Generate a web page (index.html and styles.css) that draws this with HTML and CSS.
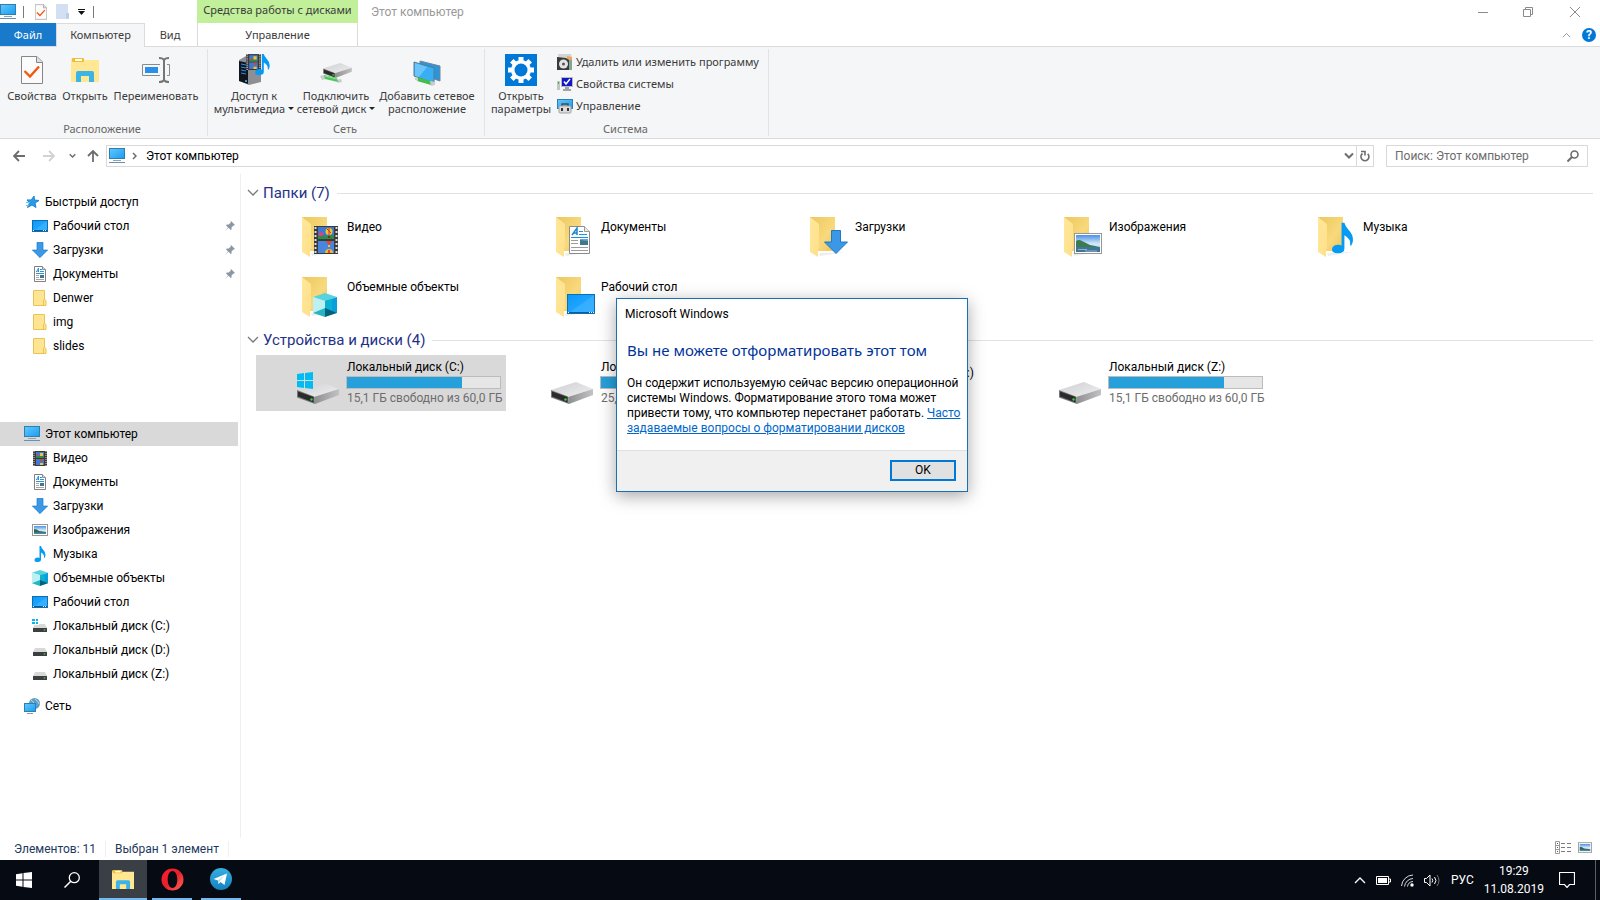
FILE: index.html
```html
<!DOCTYPE html>
<html lang="ru">
<head>
    <meta charset="UTF-8">
    <meta name="viewport" content="width=device-width, initial-scale=1.0">
    <title>Этот компьютер</title>
    <link rel="stylesheet" href="styles.css">
</head>
<body>
    <!-- Icon library -->
    <svg class="icon-library" width="0" height="0" aria-hidden="true">
        <defs>
            <linearGradient id="gBlue" x1="0" y1="0" x2="1" y2="1">
                <stop offset="0" stop-color="#62c8ff"/><stop offset="1" stop-color="#1a9cf0"/>
            </linearGradient>
            <linearGradient id="gFolder" x1="0" y1="0" x2="1" y2="1">
                <stop offset="0" stop-color="#edc75f"/><stop offset="0.6" stop-color="#f8d97c"/><stop offset="1" stop-color="#edc45c"/>
            </linearGradient>
            <linearGradient id="gLeaf" x1="0" y1="0" x2="1" y2="1">
                <stop offset="0" stop-color="#ffe79a"/><stop offset="1" stop-color="#ffe08a"/>
            </linearGradient>
            <linearGradient id="gSky" x1="0" y1="0" x2="0" y2="1">
                <stop offset="0" stop-color="#4a90e8"/><stop offset="0.5" stop-color="#cfe6f7"/>
            </linearGradient>
            <linearGradient id="gDrive" x1="0" y1="0" x2="1" y2="1">
                <stop offset="0" stop-color="#cfcfd1"/><stop offset="1" stop-color="#efeff1"/>
            </linearGradient>
            <linearGradient id="gSide" x1="0" y1="0" x2="1" y2="0">
                <stop offset="0" stop-color="#8e8e90"/><stop offset="1" stop-color="#c2c2c4"/>
            </linearGradient>
            <linearGradient id="gDesk" x1="0" y1="0" x2="1" y2="1">
                <stop offset="0" stop-color="#0a98fa"/><stop offset="0.5" stop-color="#1ea4ff"/><stop offset="0.52" stop-color="#36aeff"/><stop offset="1" stop-color="#39b0ff"/>
            </linearGradient>
            <linearGradient id="gOpera" x1="0" y1="0" x2="1" y2="1">
                <stop offset="0" stop-color="#ff1b2d"/><stop offset="0.5" stop-color="#e8202c"/><stop offset="1" stop-color="#ff6a5c"/>
            </linearGradient>
            <linearGradient id="gTelegram" x1="0" y1="0" x2="0" y2="1">
                <stop offset="0" stop-color="#37aee2"/><stop offset="1" stop-color="#1482c0"/>
            </linearGradient>
        </defs>

        <symbol id="i-pc" viewBox="0 0 16 16">
            <rect x="0.5" y="0.5" width="15" height="10" fill="url(#gBlue)" stroke="#2f7fae"/>
            <path d="M4 12.5h8" stroke="#8aa6ba"/>
            <path d="M0 14.5h16" stroke="#6f8fae"/>
        </symbol>
        <symbol id="i-check-page" viewBox="0 0 22 28">
            <path d="M0.5 0.5h15.500l5.500 5.500v21.500h-21z" fill="#fbfbfc" stroke="#868686"/>
            <path d="M15.500 0.500v6h6" fill="#dedede" stroke="#868686"/>
            <path d="M3.500 15l5.500 5.500L18 10.500" fill="none" stroke="#f4570f" stroke-width="2.400"/>
        </symbol>
        <symbol id="i-open" viewBox="0 0 28 24">
            <path d="M0 2.500Q0 0 2 0h9q2 0 2 1.500V2h15v22H0z" fill="#ffe794"/>
            <rect x="1" y="0" width="12" height="4" rx="1" fill="#f2be31"/>
            <rect x="4" y="1" width="7" height="2" fill="#fff"/>
            <path d="M5 24V15q0-2 2-2h14q2 0 2 2v9h-5v-6h-8v6z" fill="#3db4e6"/>
        </symbol>
        <symbol id="i-rename" viewBox="0 0 28 26">
            <path d="M18 7.500H0.500v11H18M25 7.500h2.500v11H25" fill="none" stroke="#8a8a8a"/>
            <rect x="3" y="10" width="13" height="6" fill="#2b8ee8"/>
            <path d="M17 1q4 0 5 2q1-2 5-2M17 25q4 0 5-2q1 2 5 2M22 3v20" fill="none" stroke="#767676" stroke-width="2"/>
        </symbol>
        <symbol id="i-film" viewBox="0 0 24 28">
            <rect width="24" height="28" fill="#3a3a3c"/>
            <path d="M1.500 1v27M22.500 1v27" stroke="#dcdcdc" stroke-width="2" stroke-dasharray="2 2"/>
            <rect x="4" y="1" width="16" height="12" fill="#3f78cf"/>
            <rect x="4" y="15" width="16" height="12" fill="#4886dd"/>
            <path d="M4 10q4-3 8 0l8-1v4H4z" fill="#2f8a43"/>
            <ellipse cx="7" cy="8" rx="2.500" ry="2" fill="#d8438a"/>
            <circle cx="15" cy="5.500" r="3.500" fill="#f0c52e"/>
            <path d="M15 2v7M13 3l4 4" stroke="#c8362f" stroke-width="1"/>
            <path d="M14 10h2v2h-2z" fill="#5a4020"/>
            <path d="M11.500 15h7l-3.500 4z" fill="#e2462e"/>
            <path d="M14 19h2v2h-2z" fill="#e8c23a"/>
            <path d="M11 27a4 4 0 0 1 8 0z" fill="#f0b62e"/>
            <path d="M15 24v3" stroke="#cf3030" stroke-width="1.500"/>
        </symbol>
        <symbol id="i-film-small" viewBox="0 0 16 16">
            <path d="M1 1h14v15H1z" fill="#3a3a3c"/>
            <path d="M2 1v15M14 1v15" stroke="#dcdcdc" stroke-width="1" stroke-dasharray="1 1"/>
            <path d="M4 2h8v6H4zM4 9h8v6H4z" fill="#4079cf"/>
            <path d="M4 6h8v2H4z" fill="#2f8a43"/>
            <path d="M4 5h3v1H4zM8 9h3v2H8z" fill="#d8433a"/>
            <path d="M8 3h3v3H8zM8 13h3v2H8z" fill="#f0c52e"/>
        </symbol>
        <symbol id="i-note" viewBox="0 0 22 32">
            <path d="M10 0h3q1 4 4 7q5 5 5 11q0 3-2 6q-1 0-1-1q1-6-6-10v14q0 5-7 5q-6 0-6-4q0-5 7-5q2 0 3 1z" fill="#059bf5"/>
        </symbol>
        <symbol id="i-media" viewBox="0 0 32 32">
            <path d="M1 6l7-4 15 4v22l-12 3-10-4z" fill="#8d8f94"/>
            <path d="M1 7l9 2v21l-9-3z" fill="#11151d"/>
            <path d="M3 10l5 1M3 13l5 1M3 16l5 1M3 19l5 1" stroke="#2c8fdf"/>
            <circle cx="8" cy="27" r="1" fill="#39c6f2"/>
            <use href="#i-film-small" x="7" y="-1" width="17" height="17"/>
            <use href="#i-note" x="17" y="0" width="15" height="21"/>
        </symbol>
        <symbol id="i-drive" viewBox="0 0 42 22">
            <path d="M0 8L25 0 42 7 17 15z" fill="url(#gDrive)"/>
            <path d="M17 15L42 7v6L18 22z" fill="url(#gSide)"/>
            <path d="M0 8l17 6.500 1 7.500L0 15.500z" fill="#77787a"/>
            <path d="M1 9.500l15.500 5.500v5.500L1 14.500z" fill="#2b2b2c"/>
            <circle cx="14.500" cy="17.500" r="1.200" fill="#35d435"/>
        </symbol>
        <symbol id="i-netdrive" viewBox="0 0 32 20">
            <use href="#i-drive" x="3" y="0" width="29" height="15"/>
            <path d="M0 13l4-1 2 4-4 1zM16 17l5-1 1 3-4 1z" fill="#c9cbcc"/>
            <path d="M4 12l13 3 1 4-13-3z" fill="#4fc35c"/>
            <path d="M5 13l12 3" stroke="#8ee598"/>
        </symbol>
        <symbol id="i-netplace" viewBox="0 0 28 26">
            <path d="M7 1l20 5v15L7 14z" fill="#2a95dc" stroke="#75858f"/>
            <path d="M1 2l20 6v15L1 16z" fill="#39aef5" stroke="#5c7b90"/>
            <path d="M2 3l12 4L6 17l-4-1z" fill="#6bc5fb"/>
            <path d="M4 17l14 4v4L4 21z" fill="#43bd4e"/>
            <path d="M17 21l5 1v3l-4 1zM2 17l3 1v3l-3-1z" fill="#ccc"/>
        </symbol>
        <symbol id="i-gear" viewBox="0 0 32 32">
            <rect width="32" height="32" fill="#0078d7"/>
            <circle cx="16" cy="16" r="8" fill="none" stroke="#fff" stroke-width="4"/>
            <g stroke="#fff" stroke-width="5">
                <path id="tooth" d="M16 3v5M16 24v5"/>
                <use href="#tooth" transform="rotate(45 16 16)"/>
                <use href="#tooth" transform="rotate(90 16 16)"/>
                <use href="#tooth" transform="rotate(135 16 16)"/>
            </g>
            <circle cx="16" cy="16" r="6.500" fill="#0078d7"/>
        </symbol>
        <symbol id="i-uninstall" viewBox="0 0 16 16">
            <path d="M1 0h13l1 4-3 2H1z" fill="#d3d4d5"/>
            <path d="M10 2l5 1v11h-5z" fill="#e9a667"/>
            <path d="M0 3l9 1 3 2v10H0z" fill="#3a3a3a"/>
            <circle cx="6.500" cy="10" r="4.500" fill="#e3e3e3"/>
            <circle cx="6.500" cy="10" r="1.500" fill="#555"/>
            <path d="M12 6h3v10h-3z" fill="#86a395"/>
        </symbol>
        <symbol id="i-sysprops" viewBox="0 0 16 16">
            <rect x="0" y="5" width="3" height="9" fill="#c4c4c4"/>
            <rect x="1" y="6" width="1" height="2" fill="#2fbf3d"/>
            <rect x="4" y="1" width="12" height="10" fill="#b9bbbe"/>
            <rect x="5" y="2" width="10" height="8" fill="#1219c4"/>
            <path d="M7 5.500l2 2.500 4-5" fill="none" stroke="#fff" stroke-width="1.500"/>
            <path d="M8 11h4v2h2v2H6v-2h2z" fill="#a2a4a7"/>
        </symbol>
        <symbol id="i-manage" viewBox="0 0 16 16">
            <rect x="0.500" y="1.500" width="15" height="9" fill="url(#gBlue)" stroke="#2f7fae"/>
            <path d="M5 8V6h6v2" fill="none" stroke="#4c4c4c" stroke-width="1.500"/>
            <rect x="2" y="8" width="12" height="7" rx="1" fill="#dcdcdc" stroke="#a2a2a2"/>
            <path d="M5 10v3M11 10v3" stroke="#333" stroke-width="2"/>
        </symbol>

        <symbol id="i-star" viewBox="0 0 16 16">
            <path d="M10 2l.5 4 4.500.5-4 2.500 1 4.500-4-2.500-4.500 2.500 2-4.500-2.500-3 4.500-.500z" fill="#2a9ae6" stroke="#1f86cf"/>
            <path d="M2 8.500h4M2 11.500h3M3 5.500h4" stroke="#6cc0f2"/>
        </symbol>
        <symbol id="i-desktop" viewBox="0 0 16 12">
            <rect x="0.500" y="0.500" width="15" height="11" fill="url(#gDesk)" stroke="#0b6fb4"/>
            <path d="M1 10.500h14" stroke="#0c5b94"/>
            <path d="M1 10.500h1M11 10.500h1M13 10.500h1" stroke="#fff"/>
        </symbol>
        <symbol id="i-down" viewBox="0 0 24 24">
            <path d="M7.500 0.500h9V12h7L12 23.500 0.500 12h7z" fill="#3a98e6" stroke="#1f79c6"/>
        </symbol>
        <symbol id="i-doc" viewBox="0 0 12 16">
            <path d="M0.500 0.500h8l3 3v12h-11z" fill="#fff" stroke="#818181"/>
            <path d="M8.500 0.500v3h3" fill="#ddd" stroke="#909090"/>
            <path d="M2 5.500h1.500M6 3.500h2M6 5.500h4M2 7.500h8" stroke="#2a93da"/>
            <path d="M2.500 6L4.500 2v4" fill="none" stroke="#2a93da"/>
            <path d="M2 9.500h3M2 11.500h3M2 13.500h8" stroke="#a5a5a5"/>
            <rect x="6" y="9" width="4" height="3" fill="#3d7792"/>
        </symbol>
        <symbol id="i-folder" viewBox="0 0 14 16">
            <path d="M0.500 0.500h11v9l1.500 1v5H0.500z" fill="#ffe591" stroke="#e8c552"/>
            <path d="M10.500 15.500v-5l1-1.500" fill="none" stroke="#e8c552"/>
        </symbol>
        <symbol id="i-picture" viewBox="0 0 28 21">
            <rect x="0.500" y="0.500" width="27" height="20" fill="#fff" stroke="#979797"/>
            <rect x="2" y="2" width="24" height="17" fill="url(#gSky)"/>
            <path d="M2 8q3-2 6 0l8 4 10 2v2H2z" fill="#3d7a52"/>
            <path d="M2 14h24v5H2z" fill="#3f7599"/>
            <path d="M4 16.500h9M11 18h12" stroke="#8fb5cb"/>
        </symbol>
        <symbol id="i-picture-small" viewBox="0 0 16 12">
            <rect x="0.500" y="0.500" width="15" height="11" fill="#fff" stroke="#979797"/>
            <rect x="2" y="2" width="12" height="8" fill="url(#gSky)"/>
            <path d="M2 5q3 0 5 2l7 1v1H2z" fill="#2f6650"/>
            <path d="M2 8.500h12V10H2z" fill="#4f86ab"/>
        </symbol>
        <symbol id="i-cube" viewBox="0 0 24 24">
            <path d="M0 4L12 0l12 4-12 4z" fill="#57d3de"/>
            <path d="M0 4l12 4v11L0 20z" fill="#bdf0f2"/>
            <path d="M24 4L12 8v11l12 1z" fill="#0a9fdc"/>
            <path d="M12 8l7-2v13h-7z" fill="#09b2d3"/>
            <path d="M0 20l12-5v9z" fill="#23b5c4"/>
            <path d="M24 20l-12-5v9z" fill="#04607c"/>
        </symbol>
        <symbol id="i-disk" viewBox="0 0 16 16">
            <path d="M3 6h10l2 4v4H1v-4z" fill="#d6d8da"/>
            <rect x="1" y="10" width="14" height="4" fill="#3c3e40"/>
            <circle cx="12.500" cy="12" r="0.800" fill="#3ee03e"/>
        </symbol>
        <symbol id="i-disk-c" viewBox="0 0 16 16">
            <use href="#i-disk" width="16" height="16"/>
            <path d="M0 1h7v6H0z" fill="#fff"/>
            <path d="M0 1h3v2H0zM4 1h2v2H4zM0 4h3v2H0zM4 4h2v2H4z" fill="#08b5f0"/>
        </symbol>
        <symbol id="i-network" viewBox="0 0 16 16">
            <circle cx="10.500" cy="5.500" r="5.500" fill="#5f9fc4"/>
            <path d="M7 2q4 2 2 5M11 1q3 2 4 5" fill="none" stroke="#b5d6e8"/>
            <rect x="0.500" y="5.500" width="11" height="8" fill="url(#gBlue)" stroke="#2f7fae"/>
            <path d="M3 15.500h6" stroke="#7d9db5"/>
        </symbol>
        <symbol id="i-pin" viewBox="0 0 10 10">
            <path d="M6 0l4 4-1 .5-.5-.1-2 2 .1 2-.8.6-2.300-2.300L0 10l3-3.500L1 4.200l.8-.7 2 .1 2-2L5.500.8z" fill="#8b97a1"/>
        </symbol>

        <!-- 50x48 folders: open leaf with an overlay -->
        <symbol id="f-base" viewBox="0 0 50 48">
            <path d="M19 40l27-1-26 4z" fill="#eee"/>
            <rect x="10" y="4" width="25" height="34" fill="url(#gFolder)"/>
            <path d="M10 4l9 7v24l-1 1v8l-8-5z" fill="url(#gLeaf)"/>
        </symbol>
        <symbol id="f-video" viewBox="0 0 50 48"><use href="#f-base"/><use href="#i-film" x="22" y="13" width="24" height="28"/></symbol>
        <symbol id="f-docs" viewBox="0 0 50 48">
            <use href="#f-base"/>
            <path d="M23.500 13.500h15l5 5v22h-20z" fill="#fff" stroke="#8b8b8b"/>
            <path d="M38.500 13.500v5h5" fill="#ececec" stroke="#9a9a9a"/>
            <path d="M26 22L31 15v7M27.500 20h4" fill="none" stroke="#1c86d1" stroke-width="1.500"/>
            <path d="M33 18.500h4M33 21.500h8M25 24.500h17" stroke="#1c93d8"/>
            <path d="M25 27.500h7M25 30.500h7M25 34.500h17M25 37.500h17" stroke="#9c9c9c"/>
            <rect x="34" y="26" width="8" height="6" fill="#3d7a86"/>
            <path d="M34 26h8v2l-8-1z" fill="#67a3e4"/>
        </symbol>
        <symbol id="f-down" viewBox="0 0 50 48"><use href="#f-base"/><use href="#i-down" x="24" y="17" width="24" height="24"/></symbol>
        <symbol id="f-pics" viewBox="0 0 50 48"><use href="#f-base"/><use href="#i-picture" x="20" y="20" width="28" height="21"/></symbol>
        <symbol id="f-music" viewBox="0 0 50 48"><use href="#f-base"/><use href="#i-note" x="24" y="9" width="21" height="32"/></symbol>
        <symbol id="f-cube" viewBox="0 0 50 48"><use href="#f-base"/><use href="#i-cube" x="21" y="20" width="24" height="24"/></symbol>
        <symbol id="f-desk" viewBox="0 0 50 48">
            <use href="#f-base"/>
            <rect x="21.500" y="21.500" width="27" height="19" fill="url(#gDesk)" stroke="#0b6fb4"/>
            <path d="M22 39.500h26" stroke="#0c5b94"/>
            <path d="M22 39.500h1M43 39.500h1M45 39.500h1M47 39.500h1" stroke="#fff"/>
        </symbol>
        <symbol id="d-plain" viewBox="0 0 50 48"><use href="#i-drive" x="5" y="23" width="42" height="22"/></symbol>
        <symbol id="d-windows" viewBox="0 0 50 48">
            <use href="#i-drive" x="5" y="23" width="42" height="22"/>
            <path d="M5 15l7-1v7H5zM13 14l8-1v8h-8zM5 22h7v7l-7-1zM13 22h8v8l-8-1z" fill="#00bcf2"/>
        </symbol>

        <symbol id="i-chevron" viewBox="0 0 12 8">
            <path d="M1 1l5 5 5-5" fill="none" stroke="currentColor" stroke-width="1.300"/>
        </symbol>
        <symbol id="i-chevron-bold" viewBox="0 0 10 8">
            <path d="M1 1.500l4 4 4-4" fill="none" stroke="currentColor" stroke-width="2"/>
        </symbol>
        <symbol id="i-arrow" viewBox="0 0 12 12">
            <path d="M12 6H1.500M6 1L1 6l5 5" fill="none" stroke="currentColor" stroke-width="1.800"/>
        </symbol>
    </svg>

    <div class="explorer">
        <header class="window-header">
            <div class="quick-access">
                <svg class="icon16"><use href="#i-pc"/></svg>
                <span class="quick-divider"></span>
                <button class="quick-button" aria-label="Свойства"><svg width="12" height="16"><use href="#i-check-page"/></svg></button>
                <button class="quick-button" aria-label="Новая папка">
                    <svg width="13" height="16" viewBox="0 0 13 16"><path d="M0 0h12v9h1v6H0z" fill="#d3dff2"/><path d="M10 14V9h3v6z" fill="#bccde8"/></svg>
                </button>
                <button class="quick-button quick-more" aria-label="Настройка панели">
                    <svg width="7" height="6" viewBox="0 0 7 6"><path d="M0 0h7v1H0zM0 2h7L3.500 6z" fill="#111"/></svg>
                </button>
                <span class="quick-divider"></span>
            </div>
            <div class="context-title">Средства работы с дисками</div>
            <div class="title-row">
                <h1 class="window-title">Этот компьютер</h1>
                <div class="window-buttons">
                    <button aria-label="Свернуть"><svg width="10" height="10" viewBox="0 0 10 10"><path d="M0 5.500h10" stroke="#8a8a8a"/></svg></button>
                    <button aria-label="Окно"><svg width="10" height="10" viewBox="0 0 10 10"><path d="M0.500 2.500h7v7h-7zM2.500 2.500v-2h7v7h-2" fill="none" stroke="#8a8a8a"/></svg></button>
                    <button aria-label="Закрыть"><svg width="10" height="10" viewBox="0 0 10 10"><path d="M0 0l10 10M10 0L0 10" stroke="#8a8a8a"/></svg></button>
                </div>
            </div>
            <nav class="tabs">
                <button class="tab tab-file">Файл</button>
                <button class="tab tab-active">Компьютер</button>
                <button class="tab tab-view">Вид</button>
            </nav>
            <button class="tab tab-context">Управление</button>
            <div class="ribbon-tools">
                <button aria-label="Свернуть ленту"><svg class="flip" width="9" height="6"><use href="#i-chevron"/></svg></button>
                <button class="help">?</button>
            </div>
        </header>

        <!-- Ribbon -->
        <section class="ribbon">
            <div class="ribbon-group group-place">
                <div class="ribbon-items">
                    <button class="big-button w56"><svg width="22" height="28"><use href="#i-check-page"/></svg><span>Свойства</span></button>
                    <button class="big-button w50"><svg width="28" height="24"><use href="#i-open"/></svg><span>Открыть</span></button>
                    <button class="big-button w92"><svg width="28" height="26"><use href="#i-rename"/></svg><span>Переименовать</span></button>
                </div>
                <div class="group-name">Расположение</div>
            </div>
            <div class="ribbon-group group-net">
                <div class="ribbon-items">
                    <button class="big-button w82"><svg width="32" height="32"><use href="#i-media"/></svg><span>Доступ к<br>мультимедиа<i class="caret"></i></span></button>
                    <button class="big-button w82"><svg class="low" width="32" height="20"><use href="#i-netdrive"/></svg><span>Подключить<br>сетевой диск<i class="caret"></i></span></button>
                    <button class="big-button w100"><svg class="low" width="28" height="26"><use href="#i-netplace"/></svg><span>Добавить сетевое<br>расположение</span></button>
                </div>
                <div class="group-name">Сеть</div>
            </div>
            <div class="ribbon-group group-system">
                <div class="ribbon-items">
                    <button class="big-button w62"><svg width="32" height="32"><use href="#i-gear"/></svg><span>Открыть<br>параметры</span></button>
                    <div class="small-buttons">
                        <button><svg class="icon16"><use href="#i-uninstall"/></svg>Удалить или изменить программу</button>
                        <button><svg class="icon16"><use href="#i-sysprops"/></svg>Свойства системы</button>
                        <button><svg class="icon16"><use href="#i-manage"/></svg>Управление</button>
                    </div>
                </div>
                <div class="group-name">Система</div>
            </div>
        </section>

        <!-- Address bar -->
        <div class="address-row">
            <div class="nav-buttons">
                <button aria-label="Назад"><svg width="12" height="12"><use href="#i-arrow"/></svg></button>
                <button class="disabled" aria-label="Вперед"><svg class="mirror" width="12" height="12"><use href="#i-arrow"/></svg></button>
                <button class="recent" aria-label="Последние"><svg width="7" height="6"><use href="#i-chevron-bold"/></svg></button>
                <button aria-label="Вверх"><svg class="quarter" width="12" height="12"><use href="#i-arrow"/></svg></button>
            </div>
            <div class="address-box">
                <svg class="icon16"><use href="#i-pc"/></svg>
                <svg class="crumb" width="5" height="8" viewBox="0 0 5 8"><path d="M1 1l3 3-3 3" fill="none" stroke="#6d6d6d" stroke-width="1.500"/></svg>
                <a class="crumb-name" href="#">Этот компьютер</a>
                <button class="address-drop" aria-label="История"><svg width="10" height="8"><use href="#i-chevron-bold"/></svg></button>
                <button class="address-refresh" aria-label="Обновить">
                    <svg width="10" height="12" viewBox="0 0 10 12"><path d="M2.500 3.500a4 4 0 1 0 5.200.3M1 1.500h4v4" fill="none" stroke="#6d6d6d" stroke-width="1.600"/></svg>
                </button>
            </div>
            <label class="search-box">
                <input type="search" placeholder="Поиск: Этот компьютер" aria-label="Поиск">
                <svg width="12" height="12" viewBox="0 0 12 12"><circle cx="7.500" cy="4.500" r="3.500" fill="none" stroke="#6d6d6d" stroke-width="1.600"/><path d="M5 7L0.500 11.500" stroke="#6d6d6d" stroke-width="2"/></svg>
            </label>
        </div>

        <div class="content">
            <!-- Navigation pane -->
            <nav class="sidebar">
                <ul>
                    <li><a class="root" href="#"><svg class="icon16"><use href="#i-star"/></svg>Быстрый доступ</a></li>
                    <li><a href="#"><svg class="icon16"><use href="#i-desktop"/></svg>Рабочий стол<svg class="pin"><use href="#i-pin"/></svg></a></li>
                    <li><a href="#"><svg class="icon16"><use href="#i-down"/></svg>Загрузки<svg class="pin"><use href="#i-pin"/></svg></a></li>
                    <li><a href="#"><svg class="icon16"><use href="#i-doc"/></svg>Документы<svg class="pin"><use href="#i-pin"/></svg></a></li>
                    <li><a href="#"><svg class="icon16"><use href="#i-folder"/></svg>Denwer</a></li>
                    <li><a href="#"><svg class="icon16"><use href="#i-folder"/></svg>img</a></li>
                    <li><a href="#"><svg class="icon16"><use href="#i-folder"/></svg>slides</a></li>
                </ul>
                <ul>
                    <li><a class="root selected" href="#"><svg class="icon16"><use href="#i-pc"/></svg>Этот компьютер</a></li>
                    <li><a href="#"><svg class="icon16"><use href="#i-film-small"/></svg>Видео</a></li>
                    <li><a href="#"><svg class="icon16"><use href="#i-doc"/></svg>Документы</a></li>
                    <li><a href="#"><svg class="icon16"><use href="#i-down"/></svg>Загрузки</a></li>
                    <li><a href="#"><svg class="icon16"><use href="#i-picture-small"/></svg>Изображения</a></li>
                    <li><a href="#"><svg class="icon16"><use href="#i-note"/></svg>Музыка</a></li>
                    <li><a href="#"><svg class="icon16"><use href="#i-cube"/></svg>Объемные объекты</a></li>
                    <li><a href="#"><svg class="icon16"><use href="#i-desktop"/></svg>Рабочий стол</a></li>
                    <li><a href="#"><svg class="icon16"><use href="#i-disk-c"/></svg>Локальный диск (C:)</a></li>
                    <li><a href="#"><svg class="icon16"><use href="#i-disk"/></svg>Локальный диск (D:)</a></li>
                    <li><a href="#"><svg class="icon16"><use href="#i-disk"/></svg>Локальный диск (Z:)</a></li>
                </ul>
                <ul>
                    <li><a class="root" href="#"><svg class="icon16"><use href="#i-network"/></svg>Сеть</a></li>
                </ul>
            </nav>

            <!-- Files -->
            <main class="files">
                <h2 class="section-title"><svg width="12" height="8"><use href="#i-chevron"/></svg>Папки (7)</h2>
                <div class="tiles">
                    <a class="tile" href="#"><svg class="tile-icon"><use href="#f-video"/></svg><span class="tile-name">Видео</span></a>
                    <a class="tile" href="#"><svg class="tile-icon"><use href="#f-docs"/></svg><span class="tile-name">Документы</span></a>
                    <a class="tile" href="#"><svg class="tile-icon"><use href="#f-down"/></svg><span class="tile-name">Загрузки</span></a>
                    <a class="tile" href="#"><svg class="tile-icon"><use href="#f-pics"/></svg><span class="tile-name">Изображения</span></a>
                    <a class="tile" href="#"><svg class="tile-icon"><use href="#f-music"/></svg><span class="tile-name">Музыка</span></a>
                    <a class="tile" href="#"><svg class="tile-icon"><use href="#f-cube"/></svg><span class="tile-name">Объемные объекты</span></a>
                    <a class="tile" href="#"><svg class="tile-icon"><use href="#f-desk"/></svg><span class="tile-name">Рабочий стол</span></a>
                </div>
                <h2 class="section-title"><svg width="12" height="8"><use href="#i-chevron"/></svg>Устройства и диски (4)</h2>
                <div class="tiles drives">
                    <a class="tile selected" href="#">
                        <svg class="tile-icon"><use href="#d-windows"/></svg>
                        <span class="drive-info">Локальный диск (C:)<span class="bar"><span class="bar-fill" style="width: 75%"></span></span><span class="free">15,1 ГБ свободно из 60,0 ГБ</span></span>
                    </a>
                    <a class="tile" href="#">
                        <svg class="tile-icon"><use href="#d-plain"/></svg>
                        <span class="drive-info">Локальный диск (D:)<span class="bar"><span class="bar-fill" style="width: 52%"></span></span><span class="free">25,1 ГБ свободно из 51,7 ГБ</span></span>
                    </a>
                    <a class="tile" href="#">
                        <svg class="tile-icon"><use href="#d-plain"/></svg>
                        <span class="tile-name">DVD RW дисковод (I:)</span>
                    </a>
                    <a class="tile" href="#">
                        <svg class="tile-icon"><use href="#d-plain"/></svg>
                        <span class="drive-info">Локальный диск (Z:)<span class="bar"><span class="bar-fill" style="width: 75%"></span></span><span class="free">15,1 ГБ свободно из 60,0 ГБ</span></span>
                    </a>
                </div>
            </main>
        </div>

        <footer class="status">
            <span class="status-text">Элементов: 11</span>
            <span class="status-text">Выбран 1 элемент</span>
            <div class="view-buttons">
                <button aria-label="Таблица">
                    <svg width="16" height="13" viewBox="0 0 16 13"><path d="M0.500 0.500h4v12h-4zM0.500 4.500h4M0.500 8.500h4" fill="none" stroke="#9a9a9a"/><path d="M6 2.500h4M12 2.500h4M6 6.500h4M12 6.500h4M6 10.500h4M12 10.500h4" stroke="#7b7b7b"/><path d="M2 2.500h1M2 6.500h1" stroke="#557"/><path d="M2 10.500h1" stroke="#c33"/></svg>
                </button>
                <button aria-label="Крупные значки"><svg width="14" height="11"><use href="#i-picture-small"/></svg></button>
            </div>
        </footer>
    </div>

    <!-- Taskbar -->
    <footer class="taskbar">
        <button class="task" aria-label="Пуск"><svg width="16" height="16" viewBox="0 0 16 16"><path d="M0 2.200L6.500 1.300V7.500H0zM7.500 1.100L16 0v7.500H7.500zM0 8.500h6.500v6.200L0 13.800zM7.500 8.500H16V16l-8.500-1.100z" fill="#fff"/></svg></button>
        <button class="task" aria-label="Поиск"><svg width="16" height="16" viewBox="0 0 16 16"><circle cx="10.300" cy="5.700" r="5" fill="none" stroke="#fff" stroke-width="1.300"/><path d="M6.800 9.200L0.500 15.500" stroke="#fff" stroke-width="1.500"/></svg></button>
        <button class="task running active" aria-label="Проводник"><svg width="22" height="19"><use href="#i-open"/></svg></button>
        <button class="task running" aria-label="Opera"><svg width="23" height="23" viewBox="0 0 23 23"><path fill-rule="evenodd" d="M11.500 0.500a11 11 0 1 1 0 22a11 11 0 1 1 0-22zM11.500 3c-3 0-4.800 4-4.800 8.500S8.500 20 11.500 20s4.800-4 4.800-8.500S14.500 3 11.500 3z" fill="url(#gOpera)"/></svg></button>
        <button class="task running" aria-label="Telegram"><svg width="22" height="22" viewBox="0 0 22 22"><circle cx="11" cy="11" r="11" fill="url(#gTelegram)"/><path d="M3.500 11L17 5.500l-2.500 11.500-4-3-2 2-.5-3.500z" fill="#fff"/><path d="M8 12.500L14.500 7.500l-5 6L8.500 16z" fill="#b9d8e9"/></svg></button>
        <div class="tray">
            <button aria-label="Скрытые значки"><svg class="flip" width="12" height="8"><use href="#i-chevron"/></svg></button>
            <button aria-label="Батарея"><svg width="15" height="9" viewBox="0 0 15 9"><path d="M0.500 0.500h12v8h-12zM13 3h1.500v3H13" fill="none" stroke="#fff"/><rect x="2" y="2" width="9" height="5" fill="#fff"/></svg></button>
            <button aria-label="Сеть"><svg width="13" height="13" viewBox="0 0 13 13"><path d="M0.500 12A12 12 0 0 1 12 1M3.500 12.500A9 9 0 0 1 12 4.500M6.500 12.500A6 6 0 0 1 12 7.500" fill="none" stroke="#dadada"/><circle cx="11" cy="11" r="1.700" fill="#fff"/></svg></button>
            <button aria-label="Громкость"><svg width="17" height="13" viewBox="0 0 17 13"><path d="M0.500 4.500h2l3.500-3.500v11l-3.500-3.500h-2zM8 4.500q1.500 2 0 4M10.500 3q3 3.500 0 7" fill="none" stroke="#fff"/><path d="M13 1q4 5.500 0 11" fill="none" stroke="#777"/></svg></button>
            <button class="language">РУС</button>
            <button class="clock">19:29<br>11.08.2019</button>
            <button class="action-center" aria-label="Центр уведомлений"><svg width="16" height="16" viewBox="0 0 16 16"><path d="M0.500 0.500h15v12h-5l-2.500 3-2.500-3h-5z" fill="none" stroke="#fff" stroke-width="1.200"/></svg></button>
            <button class="show-desktop" aria-label="Свернуть все окна"></button>
        </div>
    </footer>

    <!-- Message box -->
    <div class="dialog" role="dialog" aria-labelledby="dialogHeading">
        <div class="dialog-title">Microsoft Windows</div>
        <h2 class="dialog-heading" id="dialogHeading">Вы не можете отформатировать этот том</h2>
        <p class="dialog-text">Он содержит используемую сейчас версию операционной<br>системы Windows. Форматирование этого тома может<br>привести тому, что компьютер перестанет работать. <a href="#">Часто<br>задаваемые вопросы о форматировании дисков</a></p>
        <div class="dialog-footer"><button class="ok-button">OK</button></div>
    </div>
</body>
</html>
```
FILE: styles.css
```css
* {
    margin: 0;
    padding: 0;
    box-sizing: border-box;
}

body {
    font-family: Roboto, 'Noto Sans', sans-serif;
    font-size: 12px;
    line-height: 16px;
    color: #000;
    background: #fff;
    height: 100vh;
    display: flex;
    flex-direction: column;
    overflow: hidden;
    position: relative;
}

button {
    font: inherit;
    color: inherit;
    border: none;
    background: none;
    white-space: nowrap;
}

a {
    color: inherit;
    text-decoration: none;
}

svg {
    display: block;
    flex-shrink: 0;
}

.icon-library {
    position: absolute;
}

.icon16 {
    width: 16px;
    height: 16px;
}

.flip {
    transform: scaleY(-1);
}

.mirror {
    transform: scaleX(-1);
}

.quarter {
    transform: rotate(90deg);
}

.explorer {
    flex: 1;
    min-height: 0;
    display: flex;
    flex-direction: column;
}

/* Title bar and tabs */
.window-header {
    display: grid;
    grid-template-columns: 197px 161px 1fr;
    grid-template-rows: 23px 23px;
    color: #3b3b3b;
}

.quick-access {
    display: flex;
    align-items: center;
    gap: 7px;
}

.quick-divider {
    width: 1px;
    height: 12px;
    background: #7a7a7a;
}

.quick-divider + .quick-button {
    margin-left: 4px;
}

.quick-button + .quick-button {
    margin-left: 2px;
}

.quick-more {
    margin-right: 1px;
}

.context-title {
    font-family: 'Noto Sans', sans-serif;
    font-size: 11px;
    background: #c1ef9a;
    text-align: center;
    line-height: 20px;
    white-space: nowrap;
}

.title-row {
    display: flex;
    justify-content: space-between;
    padding-left: 13px;
}

.window-title {
    font-size: 12px;
    font-weight: normal;
    line-height: 24px;
    color: #999;
}

.window-buttons {
    display: flex;
}

.window-buttons button {
    width: 45px;
    display: flex;
    align-items: center;
    justify-content: center;
}

.window-buttons button:last-child {
    width: 50px;
}

.tabs {
    display: flex;
}

.tab {
    font-family: 'Noto Sans', sans-serif;
    font-size: 11px;
    text-align: center;
    line-height: 23px;
}

.tab-file {
    width: 56px;
    color: #fff;
    background: #1979ca;
}

.tab-active {
    width: 89px;
    background: #f5f6f7;
    border: 1px solid #dadbdc;
    border-bottom: none;
    margin-bottom: -1px;
    padding-bottom: 2px;
    line-height: 20px;
    z-index: 1;
}

.tab-view {
    width: 50px;
}

.tab-context {
    border: solid #dadbdc;
    border-width: 0 1px;
}

.ribbon-tools {
    display: flex;
    align-items: center;
    justify-content: flex-end;
    gap: 11px;
    padding-right: 4px;
    color: #999;
}

.help {
    width: 14px;
    height: 14px;
    border-radius: 50%;
    line-height: 14px;
    font-weight: bold;
    color: #fff;
    background: #0078d7;
}

/* Ribbon */
.ribbon {
    font-family: 'Noto Sans', sans-serif;
    font-size: 11px;
    display: flex;
    height: 93px;
    padding: 2px 0;
    background: #f5f6f7;
    border: solid #dadbdc;
    border-width: 1px 0;
    color: #3b3b3b;
}

.ribbon-group {
    display: flex;
    flex-direction: column;
    justify-content: space-between;
    border-right: 1px solid #e2e3e4;
    padding: 5px 4px 0 5px;
}

.group-place {
    width: 208px;
    padding-left: 4px;
}

.group-net {
    width: 277px;
}

.group-system {
    width: 284px;
}

.ribbon-items {
    display: flex;
    flex: 1;
}

.big-button {
    display: flex;
    flex-direction: column;
    align-items: center;
    line-height: 13px;
}

.big-button svg {
    height: 32px;
    margin-bottom: 3px;
}

.big-button svg.low {
    padding-top: 6px;
}

.w50 { width: 50px; }
.w56 { width: 56px; }
.w62 { width: 62px; }
.w82 { width: 82px; }
.w92 { width: 92px; }
.w100 { width: 100px; }

.caret {
    display: inline-block;
    border: 3px solid transparent;
    border-top-color: #222;
    border-bottom: none;
    margin-left: 3px;
    vertical-align: 3px;
}

.small-buttons {
    display: flex;
    flex-direction: column;
    padding-left: 5px;
}

.small-buttons button {
    display: flex;
    align-items: center;
    gap: 3px;
    height: 22px;
    padding-bottom: 6px;
}

.group-name {
    text-align: center;
    color: #666;
    line-height: 14px;
    padding-right: 3px;
}

/* Address bar */
.address-row {
    display: flex;
    align-items: center;
    gap: 12px;
    height: 34px;
    margin-bottom: 1px;
    padding: 0 12px 0 13px;
    color: #6d6d6d;
}

.nav-buttons {
    display: flex;
    align-items: center;
    gap: 12px;
    width: 81px;
}

.nav-buttons .disabled {
    color: #d2d2d2;
    margin-left: 6px;
}

.nav-buttons .recent {
    margin: 0 -1px 0 2px;
}

.address-box {
    flex: 1;
    display: flex;
    align-items: center;
    height: 22px;
    border: 1px solid #d9d9d9;
    padding-left: 2px;
}

.crumb {
    margin: 0 9px 0 7px;
}

.crumb-name {
    flex: 1;
    color: #000;
}

.address-drop,
.address-refresh {
    display: flex;
    align-items: center;
    justify-content: center;
    width: 16px;
    height: 20px;
}

.address-drop {
    border-right: 1px solid #d9d9d9;
}

.search-box {
    display: flex;
    align-items: center;
    width: 202px;
    height: 22px;
    border: 1px solid #d9d9d9;
    padding: 0 8px;
}

.search-box input {
    flex: 1;
    min-width: 0;
    font: inherit;
    border: none;
    outline: none;
    background: none;
}

.search-box input::placeholder {
    color: #6d6d6d;
}

.content {
    flex: 1;
    min-height: 0;
    display: flex;
}

/* Navigation pane */
.sidebar {
    width: 241px;
    border-right: 1px solid #f0f0f0;
    padding: 16px 2px 0 0;
}

.sidebar ul {
    list-style: none;
}

.sidebar ul:nth-child(2) {
    margin: 64px 0 8px;
}

.sidebar a {
    display: flex;
    align-items: center;
    gap: 5px;
    height: 24px;
    padding: 0 3px 0 32px;
    white-space: nowrap;
}

.sidebar a.root {
    padding-left: 24px;
}

.pin {
    width: 10px;
    height: 10px;
    margin-left: auto;
}

.selected {
    background: #d9d9d9;
}

/* Files */
.files {
    flex: 1;
    min-width: 0;
    padding: 7px 7px 0 6px;
}

.section-title {
    display: flex;
    align-items: center;
    height: 24px;
    font-size: 15px;
    font-weight: normal;
    color: #1e3287;
}

.section-title svg {
    color: #7a7a7a;
    margin-right: 4px;
}

.section-title::after {
    content: '';
    flex: 1;
    height: 1px;
    margin-left: 7px;
    background: #e2e2e2;
}

.tiles {
    display: grid;
    grid-template-columns: repeat(auto-fill, 250px);
    gap: 4px;
    padding: 4px 0 3px 9px;
}

.drives {
    padding-top: 3px;
}

.tile {
    display: flex;
    gap: 5px;
    height: 56px;
    padding: 4px 5px 0 36px;
    white-space: nowrap;
}

.tile-icon {
    width: 50px;
    height: 48px;
}

.tile-name {
    padding-top: 6px;
}

.drive-info {
    flex: 1;
    display: flex;
    flex-direction: column;
    line-height: 16px;
}

.bar {
    width: 155px;
    height: 13px;
    margin: 1px 0 1px -1px;
    border: 1px solid #bcbcbc;
    background: #e6e6e6;
}

.bar-fill {
    display: block;
    height: 100%;
    background: #26a0da;
}

.free {
    color: #6d6d6d;
}

/* Status bar */
.status {
    display: flex;
    align-items: center;
    height: 22px;
    padding: 0 8px 0 14px;
    color: #1e395b;
}

.status-text {
    padding-right: 9px;
    margin-right: 9px;
    border-right: 1px solid #f0f0f0;
}

.view-buttons {
    display: flex;
    align-items: center;
    gap: 7px;
    margin-left: auto;
    padding-bottom: 4px;
}

/* Taskbar */
.taskbar {
    display: flex;
    height: 40px;
    padding-left: 2px;
    color: #fff;
    background: #060a12;
}

.task {
    display: flex;
    align-items: center;
    justify-content: center;
    width: 44px;
    margin-right: 5px;
}

.task:first-child {
    margin-right: 4px;
}

.task.running {
    width: 40px;
    margin-right: 9px;
    border-bottom: 2px solid #76b9ed;
}

.task.active {
    width: 48px;
    margin-right: 5px;
    background: #3a3e45;
}

.tray {
    display: flex;
    align-items: center;
    gap: 10px;
    margin-left: auto;
}

.clock {
    line-height: 18px;
    text-align: center;
}

.action-center {
    margin: 0 10px 0 5px;
}

.show-desktop {
    align-self: stretch;
    width: 5px;
    border-left: 1px solid #5c6066;
}

/* Message box */
.dialog {
    position: absolute;
    top: 298px;
    left: calc(50% - 184px);
    width: 352px;
    display: flex;
    flex-direction: column;
    background: #fff;
    border: 1px solid #1870b5;
    box-shadow: 0 4px 16px rgba(0, 0, 0, 0.35);
    white-space: nowrap;
}

.dialog-title {
    padding: 7px 8px 0;
}

.dialog-heading {
    font-family: 'Noto Sans', sans-serif;
    font-size: 15px;
    line-height: 20px;
    font-weight: normal;
    color: #003399;
    padding: 18px 10px 16px;
}

.dialog-text {
    line-height: 15px;
    padding: 0 10px 14px;
}

.dialog-text a {
    color: #0066cc;
    text-decoration: underline;
}

.dialog-footer {
    display: flex;
    justify-content: flex-end;
    padding: 9px 11px 10px;
    background: #f0f0f0;
    border-top: 1px solid #dfdfdf;
}

.ok-button {
    width: 66px;
    height: 21px;
    line-height: 17px;
    background: #e1e1e1;
    border: 2px solid #0078d7;
}
```
